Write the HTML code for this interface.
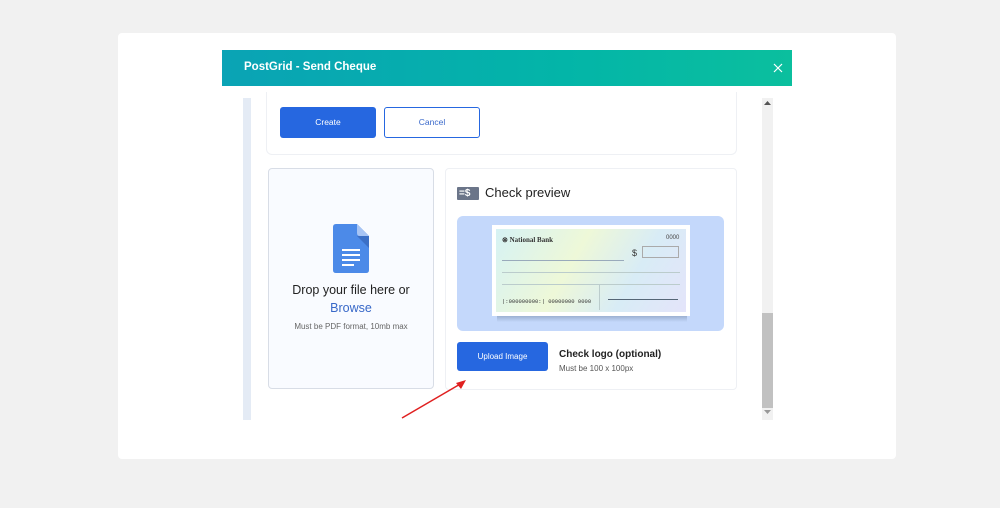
<!DOCTYPE html>
<html><head><style>
body{margin:0;width:1000px;height:508px;background:#f1f1f1;position:relative;overflow:hidden;font-family:"Liberation Sans",sans-serif}
div{position:absolute;box-sizing:border-box}
</style></head><body>
<div style="left:118px;top:33px;width:778px;height:426px;background:#fff;border-radius:4px"></div>
<div style="left:222px;top:50px;width:570px;height:36px;background:linear-gradient(90deg,#0aa3b5,#03b5a8 60%,#0bbf9e)"></div>
<div style="left:244px;top:61px;color:#fff;font-size:11.5px;font-weight:bold">PostGrid - Send Cheque</div>
<svg style="position:absolute;left:773px;top:63px" width="10" height="10"><path d="M1 1L9 9M9 1L1 9" stroke="#fff" stroke-width="1.2"/></svg>
<div style="left:243px;top:98px;width:8px;height:322px;background:#e4ebf5"></div>
<div style="left:762px;top:98px;width:11px;height:322px;background:#f1f1f1"></div>
<div style="left:762px;top:313px;width:11px;height:95px;background:#c1c1c1"></div>
<svg style="position:absolute;left:764px;top:101px" width="7" height="5"><path d="M0 4L3.5 0L7 4Z" fill="#555"/></svg>
<svg style="position:absolute;left:764px;top:410px" width="7" height="5"><path d="M0 0L3.5 4L7 0Z" fill="#999"/></svg>
<div style="left:266px;top:92px;width:471px;height:63px;border:1px solid #eef0f4;border-top:none;border-radius:0 0 6px 6px"></div>
<div style="left:280px;top:107px;width:96px;height:31px;background:#2667e0;border-radius:3px;color:#fff;font-size:8.5px;text-align:center;line-height:31px">Create</div>
<div style="left:384px;top:107px;width:96px;height:31px;border:1px solid #2667e0;border-radius:3px;color:#3b6acb;font-size:8.5px;text-align:center;line-height:29px">Cancel</div>
<div style="left:268px;top:168px;width:166px;height:221px;background:#f9fbff;border:1px solid #d8dde6;border-radius:4px"></div>
<svg style="position:absolute;left:333px;top:224px" width="36" height="49"><path d="M3 0H24L36 12V46Q36 49 33 49H3Q0 49 0 46V3Q0 0 3 0Z" fill="#4c8ae8"/><path d="M24 0L36 12H27Q24 12 24 9Z" fill="#a7c4f4"/><path d="M24 12L36 24V12Z" fill="#3b6fc6"/><rect x="9" y="25" width="18" height="2" fill="#fff"/><rect x="9" y="30" width="18" height="2" fill="#fff"/><rect x="9" y="35" width="18" height="2" fill="#fff"/><rect x="9" y="40" width="12" height="2" fill="#fff"/></svg>
<div style="left:268px;top:283px;width:166px;text-align:center;font-size:12.5px;color:#222">Drop your file here or</div>
<div style="left:268px;top:301px;width:166px;text-align:center;font-size:12.5px;color:#3868c8">Browse</div>
<div style="left:268px;top:322px;width:166px;text-align:center;font-size:8px;color:#666">Must be PDF format, 10mb max</div>
<div style="left:445px;top:168px;width:292px;height:222px;border:1px solid #eef0f4;border-radius:4px"></div>
<div style="left:457px;top:187px;width:22px;height:13px;background:#6b7589;border-radius:1px;color:#fff;font-size:10px;line-height:13px;font-weight:bold;padding-left:2px">=$</div>
<div style="left:485px;top:185px;font-size:13px;color:#222">Check preview</div>
<div style="left:457px;top:216px;width:267px;height:115px;background:#c4d8fb;border-radius:6px"></div>
<div style="left:497px;top:314px;width:190px;height:8px;background:linear-gradient(#8fa4c4,#c4d8fb)"></div>
<div style="left:492px;top:225px;width:198px;height:91px;background:#fff"></div>
<div style="left:496px;top:229px;width:190px;height:83px;background:linear-gradient(120deg,#d6f2f4,#eef8d8 40%,#d8ecf6 70%,#e4e4fa)"></div>
<div style="left:502px;top:236px;font-size:7px;font-family:'Liberation Serif',serif;font-weight:bold;color:#333">⊗ National Bank</div>
<div style="left:666px;top:235px;font-size:6px;color:#444">0000</div>
<div style="left:632px;top:248px;font-size:9px;color:#333">$</div>
<div style="left:642px;top:246px;width:37px;height:12px;border:1px solid #aaa"></div>
<div style="left:502px;top:260px;width:122px;height:1px;background:#9ab"></div>
<div style="left:502px;top:272px;width:178px;height:1px;background:#bcc"></div>
<div style="left:502px;top:284px;width:178px;height:1px;background:#bcc"></div>
<div style="left:599px;top:284px;width:1px;height:26px;background:#bcc"></div>
<div style="left:608px;top:299px;width:70px;height:1px;background:#567"></div>
<div style="left:502px;top:298px;font-size:5.5px;color:#333;font-family:'Liberation Mono',monospace">|:000000000:| 00000000 0000</div>
<div style="left:457px;top:342px;width:91px;height:29px;background:#2667e0;border-radius:3px;color:#fff;font-size:8px;text-align:center;line-height:29px">Upload Image</div>
<div style="left:559px;top:349px;font-size:10px;font-weight:bold;color:#222">Check logo (optional)</div>
<div style="left:559px;top:364px;font-size:8px;color:#555">Must be 100 x 100px</div>
<svg style="position:absolute;left:398px;top:376px" width="72" height="46"><path d="M4 42L64 7" stroke="#e02020" stroke-width="1.5"/><path d="M68 4L58 7L63 13Z" fill="#e02020"/></svg>
</body></html>
